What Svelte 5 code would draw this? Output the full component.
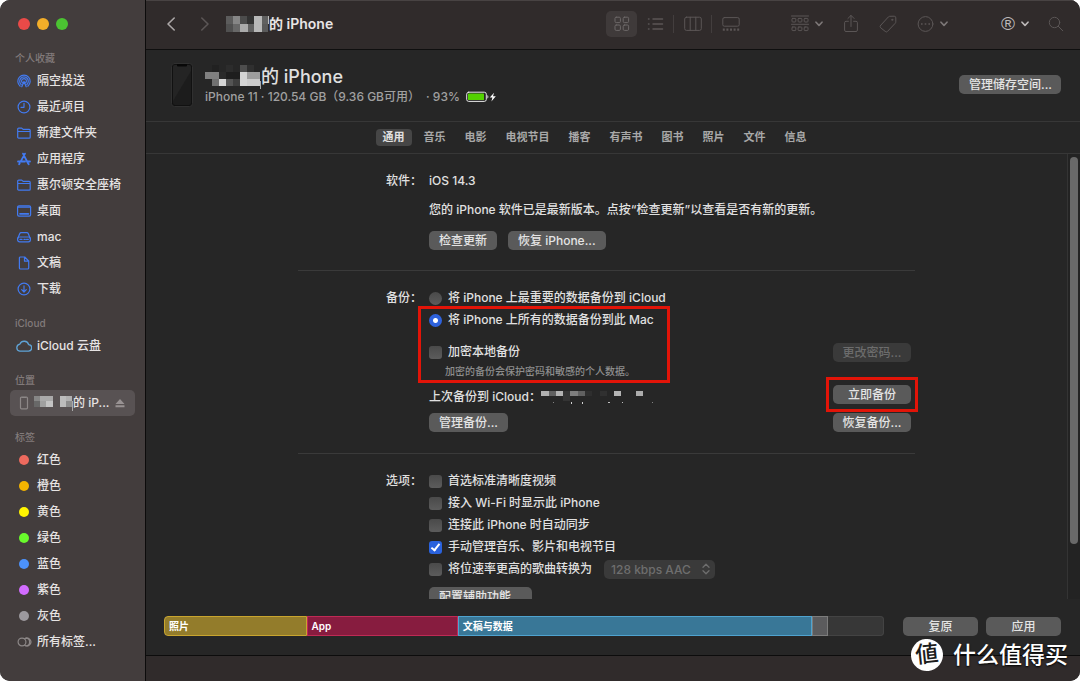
<script>
  const favorites = [
    { name: '隔空投送', icon: 'airdrop' },
    { name: '最近项目', icon: 'clock' },
    { name: '新建文件夹', icon: 'folder' },
    { name: '应用程序', icon: 'apps' },
    { name: '惠尔顿安全座椅', icon: 'folder' },
    { name: '桌面', icon: 'desktop' },
    { name: 'mac', icon: 'drive' },
    { name: '文稿', icon: 'doc' },
    { name: '下载', icon: 'download' }
  ];

  const tags = [
    { name: '红色', color: '#ed6a5e' },
    { name: '橙色', color: '#f4b400' },
    { name: '黄色', color: '#fff500' },
    { name: '绿色', color: '#69fa2c' },
    { name: '蓝色', color: '#4c92fb' },
    { name: '紫色', color: '#d26cff' },
    { name: '灰色', color: '#9c999e' }
  ];

  const tabs = ['通用', '音乐', '电影', '电视节目', '播客', '有声书', '图书', '照片', '文件', '信息'];
  let activeTab = $state('通用');

  let backupTarget = $state('mac');
  let encrypt = $state(false);

  let options = $state([
    { label: '首选标准清晰度视频', checked: false },
    { label: '接入 Wi-Fi 时显示此 iPhone', checked: false },
    { label: '连接此 iPhone 时自动同步', checked: false },
    { label: '手动管理音乐、影片和电视节目', checked: true }
  ]);
  let convert = $state(false);

  const usage = [
    { name: '照片', kind: 'photos', percent: 19.8 },
    { name: 'App', kind: 'app', percent: 21 },
    { name: '文稿与数据', kind: 'docs', percent: 49.2 },
    { name: '', kind: 'other', percent: 2.2 }
  ];

  // hidden owner name, one [x, y, w, h, grey] per block
  const titleMosaic = [
    [0, 0, 7, 8, 92], [7, 0, 7, 8, 134], [14, 0, 7, 8, 76], [21, 0, 7, 8, 50], [28, 0, 8, 16, 184],
    [36, 0, 6, 8, 96], [0, 8, 7, 8, 80], [7, 8, 7, 8, 104], [14, 8, 8, 8, 170], [22, 8, 6, 8, 96],
    [36, 8, 6, 8, 90], [42, 0, 1, 8, 190]
  ];
  const nameMosaic = [
    [7, 0, 7, 7, 33], [21, 0, 7, 7, 44], [35, 0, 7, 7, 78], [42, 0, 7, 7, 48], [0, 7, 14, 7, 128],
    [14, 7, 7, 7, 42], [21, 7, 14, 7, 30], [35, 7, 7, 14, 212], [42, 7, 13, 7, 158], [7, 14, 7, 7, 112],
    [14, 14, 7, 7, 212], [21, 14, 7, 7, 84], [28, 14, 7, 7, 62], [42, 14, 13, 7, 204], [55, 16, 1, 8, 170]
  ];
  const sideMosaic = [
    [0, 0, 6, 5, 134], [6, 0, 13, 5, 170], [0, 5, 6, 6, 104], [6, 5, 6, 6, 160], [12, 5, 7, 6, 196],
    [26, 0, 6, 11, 188], [32, 0, 6, 5, 176], [32, 5, 6, 6, 140], [38, 5, 1, 10, 170]
  ];
  const dateMosaic = [
    [0, 0, 8, 5, 176], [8, 0, 7, 5, 96], [15, 0, 7, 5, 178], [22, 0, 7, 10, 52], [29, 0, 8, 5, 126],
    [37, 0, 7, 5, 96], [44, 0, 7, 5, 46], [59, 0, 7, 5, 48], [73, 0, 7, 5, 180], [95, 0, 7, 5, 172],
    [30, 11, 1, 2, 210], [41, 11, 1, 2, 210], [67, 11, 2, 1, 190], [81, 11, 1, 1, 190], [12, 11, 1, 1, 130],
    [111, 11, 1, 1, 130]
  ];
</script>

{#snippet mosaic(blocks, width, height)}
  <svg class="mosaic" {width} {height} aria-hidden="true" shape-rendering="crispEdges">
    {#each blocks as [x, y, w, h, g]}
      <rect {x} {y} width={w} height={h} fill="rgb({g},{g},{g})" />
    {/each}
  </svg>
{/snippet}

{#snippet chevron()}
  <svg width="8" height="6" viewBox="0 0 8 6"><path d="M1 1.2 4 4.4 7 1.2" stroke-width="1.6" /></svg>
{/snippet}

{#snippet sideIcon(name)}
  <svg class="icon" width="16" height="16" viewBox="0 0 16 16" aria-hidden="true">
    {#if name === 'airdrop'}
      <path d="M4.2 13.2a6.2 6.2 0 1 1 7.6 0M5.2 11.5a4.3 4.3 0 1 1 5.6 0M6.4 9.8a2.4 2.4 0 1 1 3.2 0" />
      <path d="M8 8.2 5.4 14h5.2z" fill="#433d3d" stroke="none" />
      <path d="M8 8.4 5.8 13.8M8 8.4l2.2 5.4" />
    {:else if name === 'clock'}
      <circle cx="8" cy="8" r="5.9" /><path d="M8 4.4V8.3H5" />
    {:else if name === 'folder'}
      <path d="M1.7 12.2V4.1a1 1 0 0 1 1-1h3l1.4 1.3h6.1a1 1 0 0 1 1 1v6.8a1 1 0 0 1-1 1H2.7a1 1 0 0 1-1-1zM1.7 6.5h12.5" />
    {:else if name === 'apps'}
      <path d="M7 2.6 11.9 12M9 2.6 4.7 10.4M2 10.5h7M11.4 10.5H14M3.7 12.2l-.6 1M12.2 12.5l.5.8" stroke-width="1.8" />
    {:else if name === 'desktop'}
      <rect x="1.6" y="2.8" width="13" height="10.4" rx="1.4" /><path d="M1.6 4.2h13" /><path d="M4 10.8h8.4" stroke-width="1.7" />
    {:else if name === 'drive'}
      <path d="M1.6 9.7 3.8 4.6a1.5 1.5 0 0 1 1.3-.9h5.8a1.5 1.5 0 0 1 1.3.9l2.2 5.1" />
      <rect x="1.6" y="8" width="12.8" height="4.8" rx="2" /><path d="M8 10.4h.6M9.8 10.4h.6M11.5 10.4h.8M4 10.4h2" />
    {:else if name === 'doc'}
      <path d="M3.4 3a1 1 0 0 1 1-1h4.3l4 4v7a1 1 0 0 1-1 1H4.4a1 1 0 0 1-1-1zM8.5 2v4.2h4.2" />
    {:else if name === 'download'}
      <circle cx="8" cy="8" r="5.9" /><path d="M8 4.8v6M5.7 8.7 8 11l2.3-2.3" />
    {:else if name === 'cloud'}
      <path class="sky" d="M4.3 12.9h7.6a3 3 0 0 0 .5-6 4.2 4.2 0 0 0-7.9-.5A3.3 3.3 0 0 0 4.3 12.9z" transform="translate(-1 -1) scale(1.1)" />
    {:else if name === 'phone'}
      <path class="grey" d="M4.5 3.2a1 1 0 0 1 1-1h5a1 1 0 0 1 1 1v9.6a1 1 0 0 1-1 1h-5a1 1 0 0 1-1-1zM6.4 2.4h3.2" />
    {:else if name === 'all'}
      <g class="grey"><circle cx="6" cy="8" r="3.9" /><path d="M8.700 11.200a3.900 3.900 0 1 0 0-6.400M9.700 4.100a3.900 3.900 0 0 1 0 7.800" /></g>
    {/if}
  </svg>
{/snippet}

<div class="window">
  <aside class="sidebar">
    <div class="lights">
      <button class="light close" aria-label="关闭"></button>
      <button class="light minimize" aria-label="最小化"></button>
      <button class="light zoom" aria-label="缩放"></button>
    </div>

    <nav>
      <h2>个人收藏</h2>
      {#each favorites as item}
        <a class="item" href="#{item.icon}">{@render sideIcon(item.icon)}<span>{item.name}</span></a>
      {/each}

      <h2>iCloud</h2>
      <a class="item" href="#icloud">{@render sideIcon('cloud')}<span>iCloud 云盘</span></a>

      <h2>位置</h2>
      <a class="item selected" href="#iphone">
        {@render sideIcon('phone')}
        <span class="device-name">{@render mosaic(sideMosaic, 39, 15)}的 iP...</span>
        <svg class="eject" width="10" height="9" viewBox="0 0 10 9"><path d="M5 0 9.5 5h-9zM.5 6.3h9V8.3h-9z" /></svg>
      </a>

      <h2>标签</h2>
      {#each tags as tag}
        <a class="item" href="#tag">
          <i class="dot" style="background: {tag.color}"></i><span>{tag.name}</span>
        </a>
      {/each}
      <a class="item" href="#tags">{@render sideIcon('all')}<span>所有标签...</span></a>
    </nav>
  </aside>

  <main>
    <header class="toolbar">
      <button class="nav-btn back" aria-label="后退">
        <svg width="10" height="16" viewBox="0 0 10 16"><path d="M8.2 2 2 8l6.2 6" stroke-width="1.6" /></svg>
      </button>
      <button class="nav-btn" aria-label="前进">
        <svg width="10" height="16" viewBox="0 0 10 16"><path d="M1.8 2 8 8l-6.2 6" stroke-width="1.6" /></svg>
      </button>
      <h1>{@render mosaic(titleMosaic, 43, 16)}的 iPhone</h1>

      <div class="views">
        <button class="view current" aria-label="图标">
          <svg width="18" height="18" viewBox="0 0 18 18">
            <rect x="2" y="2.2" width="5.4" height="5.4" rx="1.2" /><rect x="10.2" y="2.2" width="5.4" height="5.4" rx="1.2" />
            <rect x="2" y="10" width="5.4" height="5.4" rx="1.2" /><rect x="10.2" y="10" width="5.4" height="5.4" rx="1.2" />
          </svg>
        </button>
        <button class="view" aria-label="列表">
          <svg width="18" height="18" viewBox="0 0 18 18"><path d="M7 4h9.500M7 9h9.500M7 14h9.500M2.500 4h.5M2.500 9h.5M2.500 14h.5" stroke-width="1.500" /></svg>
        </button>
        <span class="split"></span>
        <button class="view" aria-label="分栏">
          <svg width="18" height="18" viewBox="0 0 18 18"><rect x=".7" y="2.2" width="16.6" height="13.2" rx="1.8" /><path d="M6.2 2.2v13.2M11.8 2.2v13.2" /></svg>
        </button>
        <span class="split"></span>
        <button class="view" aria-label="画廊">
          <svg width="18" height="18" viewBox="0 0 18 18"><rect x=".8" y="2.600" width="16.400" height="8.600" rx="1.500" /><path d="M.8 14.600h16.400" stroke-width="2.200" stroke-dasharray="2 1.600" stroke-linecap="butt" /></svg>
        </button>
      </div>

      <div class="actions">
        <button aria-label="分组">
          <svg width="18" height="18" viewBox="0 0 18 18">
            <path d="M.5 1h17M.5 9.3h17" />
            <rect x="1" y="3.4" width="3.8" height="3.6" rx=".8" /><rect x="7.1" y="3.4" width="3.8" height="3.6" rx=".8" /><rect x="13.2" y="3.4" width="3.8" height="3.6" rx=".8" />
            <rect x="1" y="12" width="3.8" height="3.6" rx=".8" /><rect x="7.1" y="12" width="3.8" height="3.6" rx=".8" /><rect x="13.2" y="12" width="3.8" height="3.6" rx=".8" />
          </svg>
          <span class="mid">{@render chevron()}</span>
        </button>
        <button aria-label="共享">
          <svg width="16" height="20" viewBox="0 0 16 20"><path d="M5.4 7.3H3a1.4 1.4 0 0 0-1.4 1.4v7.4A1.4 1.4 0 0 0 3 17.5h10a1.4 1.4 0 0 0 1.4-1.4V8.7A1.4 1.4 0 0 0 13 7.3h-2.4M8 12.5V1.5M4.9 4.5 8 1.4l3.1 3.1" /></svg>
        </button>
        <button aria-label="标签">
          <svg width="18" height="18" viewBox="0 0 18 18"><path d="M1.5 10.5 9.3 2a2 2 0 0 1 1.3-.7l4.6-.1a1.6 1.6 0 0 1 1.6 1.6v4a2 2 0 0 1-.6 1.500L8.500 16.400a1.600 1.600 0 0 1-2.300 0l-4.600-3.700a1.600 1.600 0 0 1-.1-2.200z" /><circle cx="13.200" cy="4.800" r=".6" /></svg>
        </button>
        <button aria-label="更多">
          <svg width="17" height="18" viewBox="0 0 17 18"><circle cx="8.5" cy="9" r="7.4" /><path d="M4 9h1.600M7.700 9h1.600M11.400 9h1.600" stroke-width="1.700" stroke-linecap="butt" /></svg>
          <span class="mid">{@render chevron()}</span>
        </button>
      </div>

      <button class="account" aria-label="账户">
        <span class="reg">®</span>
        {@render chevron()}
      </button>
      <button class="search" aria-label="搜索">
        <svg width="16" height="16" viewBox="0 0 16 16"><circle cx="6.5" cy="6.5" r="5.2" /><path d="m10.3 10.3 4.5 4.5" /></svg>
      </button>
    </header>

    <section class="device">
      <svg class="handset" width="22" height="44" viewBox="0 0 22 44" aria-hidden="true">
        <rect x=".5" y=".5" width="21" height="43" rx="3" fill="#111" stroke="#303030" />
        <rect x="2" y="2" width="18" height="40" rx="2" fill="#1c1c1c" />
        <path d="M2 38 20 8V4a2 2 0 0 0-2-2H4a2 2 0 0 0-2 2z" fill="#242424" />
        <path d="M6 1h10v1.5a1 1 0 0 1-1 1H7a1 1 0 0 1-1-1z" fill="#080808" />
      </svg>
      <div class="summary">
        <p class="name">{@render mosaic(nameMosaic, 56, 24)}的 iPhone</p>
        <p class="info">
          <span>iPhone 11 · 120.54 GB（9.36 GB可用）</span>
          <span>· 93%</span>
          <svg width="31" height="12" viewBox="0 0 31 12" aria-hidden="true">
            <rect x=".7" y="1.2" width="19.6" height="9.2" rx="2" fill="none" stroke="#e8e8e8" />
            <rect x="2" y="2.6" width="16" height="6.5" rx=".6" fill="#53d200" />
            <path d="M21.4 4v3.6c1.3-.5 1.3-3.1 0-3.6z" fill="#e8e8e8" />
            <path d="M28 1.7 23.8 6.5h2.6l-1 3.9 4.4-5.1H27z" fill="#fff" />
          </svg>
        </p>
      </div>
      <button class="push">管理储存空间...</button>
    </section>

    <nav class="tabs">
      {#each tabs as tab}
        <button class="tab" class:active={activeTab === tab} onclick={() => (activeTab = tab)}>{tab}</button>
      {/each}
    </nav>

    <div class="body">
      <div class="scroller">
        <div class="panel">
          <section class="group">
            <h3>软件：</h3>
            <div class="fields">
              <p class="line">iOS 14.3</p>
              <p class="line status">您的 iPhone 软件已是最新版本。点按“检查更新”以查看是否有新的更新。</p>
              <div class="buttons">
                <button class="push">检查更新</button>
                <button class="push">恢复 iPhone...</button>
              </div>
            </div>
          </section>

          <section class="group">
            <h3>备份：</h3>
            <div class="fields">
              <label class="check">
                <input type="radio" name="target" value="icloud" bind:group={backupTarget} />
                将 iPhone 上最重要的数据备份到 iCloud
              </label>
              <div class="marked">
                <label class="check">
                  <input type="radio" name="target" value="mac" bind:group={backupTarget} />
                  将 iPhone 上所有的数据备份到此 Mac
                </label>
                <label class="check encrypt">
                  <input type="checkbox" bind:checked={encrypt} />
                  加密本地备份
                </label>
                <p class="note">加密的备份会保护密码和敏感的个人数据。</p>
                <span class="outline wide"></span>
              </div>
              <p class="line last">上次备份到 iCloud：{@render mosaic(dateMosaic, 113, 13)}</p>
              <button class="push manage">管理备份...</button>
            </div>
            <div class="side-buttons">
              <button class="push" disabled>更改密码...</button>
              <div class="marked now">
                <button class="push">立即备份</button>
                <span class="outline"></span>
              </div>
              <button class="push">恢复备份...</button>
            </div>
          </section>

          <section class="group">
            <h3>选项：</h3>
            <div class="fields">
              {#each options as option}
                <label class="check"><input type="checkbox" bind:checked={option.checked} />{option.label}</label>
              {/each}
              <div class="convert">
                <label class="check"><input type="checkbox" bind:checked={convert} />将位速率更高的歌曲转换为</label>
                <div class="select">
                  <select disabled={!convert} aria-label="位速率">
                    <option>128 kbps AAC</option>
                    <option>192 kbps AAC</option>
                    <option>256 kbps AAC</option>
                  </select>
                  <svg width="8" height="12" viewBox="0 0 8 12"><path d="M1 4.2 4 1.2l3 3M1 7.8l3 3 3-3" stroke-width="1.3" /></svg>
                </div>
              </div>
              <button class="push assist">配置辅助功能...</button>
            </div>
          </section>
        </div>
      </div>
      <div class="track"><div class="thumb"></div></div>
    </div>

    <section class="capacity">
      <div class="bar">
        {#each usage as part}
          <div class="part {part.kind}" style="width: {part.percent}%">{part.name}</div>
        {/each}
      </div>
      <button class="push">复原</button>
      <button class="push">应用</button>
    </section>

    <footer></footer>
  </main>

  <div class="watermark"><span class="seal">値</span>什么值得买</div>
</div>

<style>
  :global(body) {
    background: #fff;
  }

  .window {
    position: relative;
    display: flex;
    height: 100vh;
    overflow: hidden;
    border-radius: 10px;
    background: #262626;
    color: #e0e0e0;
    font-family: Inter, "Noto Sans CJK SC", sans-serif;
    font-size: 12px;
    font-weight: 500;
    line-height: 22px;
    white-space: nowrap;
  }

  h1, h2, h3, p {
    margin: 0;
    font-size: inherit;
    font-weight: inherit;
  }

  button {
    padding: 0;
    border: none;
    background: none;
    color: inherit;
    font: inherit;
  }

  svg {
    flex: none;
    fill: none;
    stroke: currentColor;
    stroke-linecap: round;
    stroke-linejoin: round;
  }

  .mosaic, .handset, .info svg {
    stroke: none;
  }

  /* sidebar */
  .sidebar {
    flex: none;
    box-sizing: border-box;
    width: 146px;
    padding: 0 10px;
    border-right: 1px solid #0c0b0b;
    background: #433d3d;
  }

  .lights {
    display: flex;
    gap: 7px;
    padding: 18px 8px 7px;
  }

  .light {
    width: 12px;
    height: 12px;
    border-radius: 50%;
  }

  .close {
    background: #ea4a48;
  }

  .minimize {
    background: #f3ae29;
  }

  .zoom {
    background: #4bc332;
  }

  h2 {
    margin-top: 12px;
    padding: 0 0 1px 5px;
    color: #827b7b;
    font-size: 10px;
    line-height: 18px;
  }

  .item {
    display: flex;
    align-items: center;
    gap: 5px;
    height: 26px;
    padding: 0 10px 0 6px;
    border-radius: 5px;
    color: #e6e3e3;
    text-decoration: none;
  }

  .icon {
    color: #427af0;
    stroke-width: 1.2;
  }

  .sky {
    stroke: #5fa3d6;
  }

  .grey {
    stroke: #8c8787;
  }

  .selected {
    background: #585253;
  }

  .device-name {
    display: flex;
    align-items: center;
    margin-left: -3px;
  }

  .eject {
    margin-left: auto;
    fill: #989293;
    stroke: none;
  }

  .dot {
    width: 10px;
    height: 10px;
    margin: 0 3px;
    border-radius: 50%;
  }

  /* toolbar */
  main {
    display: flex;
    flex: 1;
    flex-direction: column;
    min-width: 0;
  }

  .toolbar {
    display: flex;
    flex: none;
    align-items: center;
    box-sizing: border-box;
    height: 50px;
    padding: 0 16px 2px 20px;
    border-top: 1px solid #484343;
    border-bottom: 1px solid #0f0f0f;
    background: #302b2b;
    color: #5b5656;
  }

  .toolbar button {
    display: flex;
    align-items: center;
  }

  .nav-btn {
    margin-right: 24px;
  }

  .nav-btn + .nav-btn {
    margin-right: 16px;
    color: #5b5656;
  }

  .back {
    color: #aba7a7;
  }

  h1 {
    display: flex;
    align-items: center;
    color: #e8e5e5;
    font-size: 14px;
    font-weight: 600;
  }

  .views {
    display: flex;
    align-items: center;
    gap: 2px;
    margin-left: auto;
  }

  .view {
    justify-content: center;
    width: 31px;
    height: 26px;
    border-radius: 5px;
  }

  .current {
    background: #3f3a3a;
    color: #6d6868;
  }

  .split {
    width: 1px;
    height: 18px;
    margin: 0 1px;
    background: #433e3e;
  }

  .actions {
    display: flex;
    align-items: center;
    gap: 20px;
    margin-left: 45px;
  }

  .actions button {
    gap: 6px;
  }

  .mid {
    display: flex;
    color: #7d7878;
  }

  .account {
    gap: 6px;
    margin-left: 53px;
    color: #bcb8b8;
  }

  .reg {
    display: flex;
    justify-content: center;
    width: 14px;
    font-family: "Liberation Sans", sans-serif;
    font-size: 19px;
    font-weight: 400;
  }

  .search {
    margin-left: 19px;
  }

  /* device summary */
  .device {
    display: flex;
    flex: none;
    align-items: center;
    gap: 12px;
    box-sizing: border-box;
    height: 72px;
    padding: 0 19px 2px 25px;
    border-bottom: 1px solid #373737;
  }

  .device .push {
    width: 102px;
    margin-left: auto;
  }

  .name {
    display: flex;
    align-items: center;
    font-size: 18px;
    line-height: 24px;
  }

  .info {
    display: flex;
    align-items: center;
    gap: 6px;
    color: #a0a0a0;
    line-height: 16px;
  }

  .push {
    flex: none;
    height: 19px;
    padding: 0 10px;
    border-radius: 5px;
    background: #5a5a5a;
    color: #e4e4e4;
    line-height: 19px;
  }

  .push:disabled {
    background: #3a3a3a;
    color: #6c6c6c;
  }

  .tabs {
    display: flex;
    flex: none;
    justify-content: center;
    align-items: center;
    gap: 5px;
    box-sizing: border-box;
    height: 32px;
    padding-right: 37px;
    border-bottom: 1px solid #373737;
  }

  .tab {
    height: 17px;
    padding: 0 7px;
    border-radius: 4px;
    color: #a8a8a8;
    font-size: 11px;
    font-weight: 600;
    line-height: 17px;
  }

  .tab.active {
    background: #464646;
    color: #e0e0e0;
  }

  /* settings */
  .body {
    display: flex;
    flex: 1;
    min-height: 0;
  }

  .scroller {
    flex: 1;
    overflow: hidden;
  }

  .panel {
    max-width: 617px;
    margin: 0 auto;
  }

  .group {
    display: flex;
    padding: 16px 4px 20px 0;
    border-bottom: 1px solid #3a3a3a;
  }

  .group:last-child {
    border-bottom: none;
  }

  h3 {
    width: 124px;
    margin-right: 7px;
    text-align: right;
  }

  .fields {
    flex: 1;
  }

  .status {
    margin-top: 7px;
  }

  .buttons {
    display: flex;
    gap: 11px;
    margin-top: 10px;
  }

  .check {
    display: flex;
    align-items: center;
    gap: 6px;
    width: max-content;
  }

  .encrypt {
    margin-top: 10px;
  }

  .note {
    padding-left: 16px;
    color: #8e8e8e;
    font-size: 10px;
    line-height: 16px;
  }

  .last {
    display: flex;
    align-items: center;
    margin-top: 7px;
  }

  .manage {
    display: block;
    margin-top: 5px;
  }

  .group:nth-child(2) {
    padding-bottom: 21px;
  }

  input {
    flex: none;
    width: 13px;
    height: 13px;
    margin: 0;
    border-radius: 3px;
    background: linear-gradient(#4a4a4a, #5c5c5c);
    appearance: none;
  }

  input[type="radio"] {
    border-radius: 50%;
  }

  input[type="radio"]:checked {
    background: radial-gradient(circle, #fff 2px, #2e62dc 3px);
  }

  input[type="checkbox"]:checked {
    background: #2a62dc;
  }

  input[type="checkbox"]:checked::before {
    content: "";
    display: block;
    width: 3px;
    height: 7px;
    margin: 1px 0 0 4px;
    border: solid #fff;
    border-width: 0 2px 2px 0;
    transform: rotate(38deg);
  }

  .marked {
    position: relative;
  }

  .outline {
    position: absolute;
    inset: -8px -7px;
    border: 3px solid #e21408;
    pointer-events: none;
  }

  .outline.wide {
    inset: -3px auto -4px -11px;
    width: 246px;
  }

  .side-buttons {
    display: flex;
    flex-direction: column;
    width: 78px;
    padding-top: 56px;
  }

  .side-buttons .push {
    display: block;
    width: 100%;
    padding: 0;
  }

  .now {
    margin: 23px 0 9px;
  }

  .convert {
    display: flex;
    align-items: center;
    gap: 12px;
  }

  .select {
    display: grid;
    align-items: center;
    color: #6e6e6e;
  }

  .select > * {
    grid-area: 1 / 1;
  }

  .select svg {
    justify-self: end;
    margin-right: 5px;
    pointer-events: none;
  }

  select {
    width: 111px;
    height: 19px;
    padding: 0 7px;
    border: none;
    border-radius: 5px;
    background: #3a3a3a;
    color: #6e6e6e;
    font: inherit;
    line-height: 19px;
    opacity: 1;
    appearance: none;
  }

  .assist {
    display: block;
    margin-top: 7px;
  }

  .track {
    flex: none;
    width: 12px;
    border-left: 1px solid #343434;
    background: #232323;
  }

  .thumb {
    width: 8px;
    height: 87%;
    margin: 3px 0 0 2px;
    border-radius: 4px;
    background: #696969;
  }

  /* capacity */
  .capacity {
    display: flex;
    flex: none;
    align-items: center;
    gap: 8px;
    box-sizing: border-box;
    height: 57px;
    padding: 0 19px 2px 18px;
    border-bottom: 1px solid #0c0c0c;
  }

  .capacity .push {
    width: 75px;
  }

  .bar {
    display: flex;
    flex: 1;
    box-sizing: border-box;
    height: 20px;
    margin-right: 11px;
    overflow: hidden;
    border-radius: 4px;
    background: #373737;
    box-shadow: inset 0 0 0 1px #434343;
  }

  .part {
    box-sizing: border-box;
    padding-left: 4px;
    border: 1px solid;
    color: #fff;
    font-size: 10px;
    font-weight: 600;
    line-height: 18px;
  }

  .photos {
    border-color: #c9a52e;
    border-radius: 4px 0 0 4px;
    background: #937c2b;
  }

  .app {
    border-color: #bf2a55;
    background: #871c3f;
  }

  .docs {
    border-color: #4fa3cf;
    background: #397797;
  }

  .other {
    border-color: #7c7c7c;
    background: #5b5b5d;
  }

  footer {
    flex: none;
    height: 25px;
    background: #302b2b;
  }

  .watermark {
    position: absolute;
    right: 12px;
    bottom: 10px;
    display: flex;
    align-items: center;
    gap: 10px;
    color: #fff;
    font-size: 23px;
    line-height: 32px;
    text-shadow: 0 1px 2px #000;
  }

  .seal {
    width: 32px;
    height: 32px;
    border-radius: 50%;
    background: #fff;
    color: #1c1c1c;
    line-height: 30px;
    text-align: center;
    text-shadow: none;
    transform: rotate(-6deg);
  }
</style>
